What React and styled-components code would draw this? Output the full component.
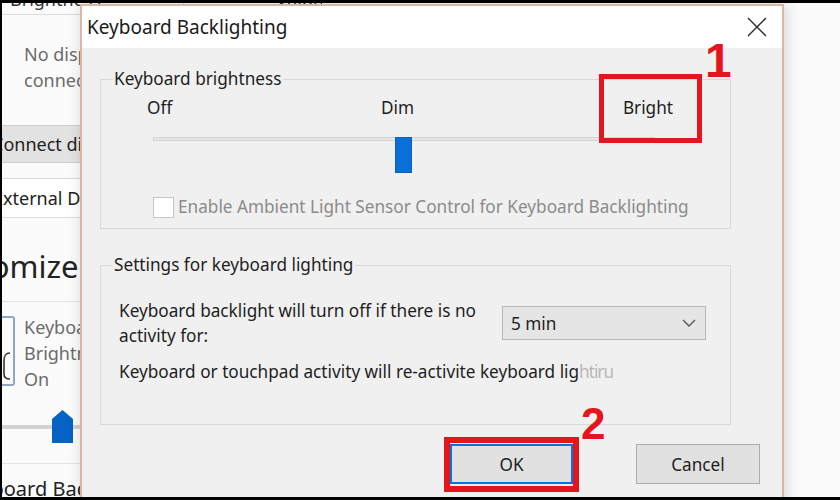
import React from 'react';
import styled, {createGlobalStyle} from 'styled-components';

const GlobalStyle = createGlobalStyle`
  html, body {
    margin: 0;
    padding: 0;
    background: #000;
  }
  body {
    font-family: "Noto Sans", "Open Sans", sans-serif;
    color: #1e1e1e;
  }
  * {
    box-sizing: border-box;
  }
`;

const Screen = styled.div`
  position: relative;
  width: 838px;
  height: 494px;
  margin: 3px 0 0 2px;
  background: #fbfbfb;
  overflow: hidden;
`;

// ---- background settings window ----

const HeaderRow = styled.div`
  display: flex;
  height: 12px;
  margin-left: -2px;
  border-bottom: 1px solid #dcdcdc;
  overflow: hidden;
`;

const HeaderCell = styled.div`
  width: ${p => p.w}px;
  flex-shrink: 0;
  border-left: ${p => (p.first ? 'none' : '1px solid #c9c9c9')};
  padding-left: ${p => p.pad || 0}px;
  text-align: ${p => p.align || 'center'};
  font-size: 18px;
  line-height: 20px;
  color: #333;
  white-space: nowrap;

  span {
    display: block;
    margin-top: -14px;
  }
`;

const BackPane = styled.div`
  display: flex;
  flex-direction: column;
  width: 320px;
`;

const GrayText = styled.div`
  margin-top: ${p => p.top || 0}px;
  padding-left: 22px;
  font-size: 18px;
  line-height: 26px;
  color: #6b6b6b;
`;

const BackButton = styled.div`
  margin-top: 32px;
  height: 38px;
  display: flex;
  align-items: center;
  background: #e2e2e2;
  border-top: 1px solid #cfcfcf;
  border-bottom: 1px solid #cfcfcf;
  font-size: 18px;
  color: #222;
  white-space: nowrap;

  span {
    margin-left: -10px;
  }
`;

const BackListItem = styled.div`
  margin-top: 15px;
  height: 40px;
  display: flex;
  align-items: center;
  background: #fff;
  border-top: 1px solid #d9d9d9;
  border-bottom: 1px solid #d9d9d9;
  font-size: 18px;
  color: #222;
  white-space: nowrap;

  span {
    margin-left: -9px;
  }
`;

const BigHeading = styled.div`
  margin-top: 30px;
  margin-left: -76px;
  font-size: 31px;
  line-height: 36px;
  color: #222;
  white-space: nowrap;
`;

const Divider = styled.div`
  margin-top: ${p => p.top}px;
  height: 1px;
  background: #e2e2e2;
`;

const TileRow = styled.div`
  margin-top: 12px;
  display: flex;
  align-items: flex-start;
`;

const TileIcon = styled.div`
  width: 13px;
  height: 70px;
  margin-top: 2px;
  border: 2px solid #8fa7c0;
  border-left: none;
  border-radius: 0 3px 3px 0;
  display: flex;
  align-items: flex-end;
  padding-bottom: 4px;
`;

const TileText = styled.div`
  padding-left: 9px;
  font-size: 18px;
  line-height: 26px;
  color: #6b6b6b;
`;

const BackSlider = styled.div`
  position: relative;
  margin-top: 18px;
  height: 34px;
`;

const BackTrack = styled.div`
  margin-top: 15px;
  height: 4px;
  background: #d2d2d2;
`;

const BackThumb = styled.svg`
  position: absolute;
  left: 50px;
  top: 0;
`;

const BottomHeading = styled.div`
  margin-top: 12px;
  margin-left: -44px;
  font-size: 20px;
  line-height: 26px;
  color: #222;
  white-space: nowrap;
`;

// ---- dialog ----

const Dialog = styled.div`
  position: absolute;
  left: 78px;
  top: 1px;
  width: 704px;
  height: 520px;
  display: flex;
  flex-direction: column;
  background: #f0f0f0;
  border: 2px solid #dbb5a6;
  box-shadow: 2px 0 14px rgba(0, 0, 0, 0.16);
`;

const TitleBar = styled.div`
  height: 42px;
  flex-shrink: 0;
  display: flex;
  align-items: center;
  justify-content: space-between;
  background: #fff;
`;

const Title = styled.div`
  padding-left: 5px;
  font-size: 19px;
  color: #1a1a1a;
`;

const CloseButton = styled.div`
  width: 50px;
  height: 42px;
  display: flex;
  align-items: center;
  justify-content: center;
`;

const Body = styled.div`
  padding: 20px 51px 0 18px;
  display: flex;
  flex-direction: column;
  font-size: 17.2px;
`;

const Group = styled.fieldset`
  margin: ${p => p.top || 0}px 0 0;
  padding: 0 0 ${p => p.bottom}px;
  min-width: 0;
  border: 1px solid #d9d9d9;
`;

const Legend = styled.legend`
  margin-left: 12px;
  padding: 0 2px 0 1px;
  font-size: 17.2px;
  line-height: 22px;
  color: #1e1e1e;
`;

const LevelLabels = styled.div`
  margin: 7px 57px 0 46px;
  display: flex;
  justify-content: space-between;
  line-height: 22px;
`;

const SliderRow = styled.div`
  position: relative;
  margin: 18px 0 0 52px;
  width: 502px;
  height: 36px;
`;

const Track = styled.div`
  margin-top: 16px;
  height: 4px;
  background: #e6e6e6;
  border: 1px solid #d3d3d3;
`;

const Thumb = styled.div`
  position: absolute;
  top: 0;
  left: ${p => p.left}px;
  width: 17px;
  height: 36px;
  background: #0a6fd6;
  border: 1px solid #0a5fb8;
`;

const CheckRow = styled.label`
  margin: 23px 0 0 52px;
  display: flex;
  align-items: center;
  gap: 4px;
  line-height: 22px;
  color: #8b8b8b;
  white-space: nowrap;
`;

const CheckBox = styled.span`
  width: 21px;
  height: 21px;
  flex-shrink: 0;
  background: #fff;
  border: 1px solid #c6c6c6;
`;

const SettingRow = styled.div`
  margin-top: ${p => p.top}px;
  padding-left: 18px;
  display: flex;
  align-items: flex-start;
  justify-content: space-between;
`;

const SettingText = styled.div`
  line-height: 25px;
  white-space: nowrap;
`;

const Faint = styled.span`
  color: #b8b8b8;
  letter-spacing: -1px;
`;

const Select = styled.div`
  margin: 8px 24px 0 0;
  width: 204px;
  height: 34px;
  padding: 0 9px 0 8px;
  display: flex;
  align-items: center;
  justify-content: space-between;
  background: #e5e5e5;
  border: 1px solid #b7b7b7;
`;

const ButtonRow = styled.div`
  margin: 19px -29px 0 0;
  display: flex;
  justify-content: flex-end;
  gap: 63px;
`;

const Button = styled.div`
  width: ${p => p.w}px;
  height: 40px;
  display: flex;
  align-items: center;
  justify-content: center;
  background: #e1e1e1;
  border: ${p => (p.primary ? '2px solid #0078d7' : '1px solid #adadad')};
  color: #1e1e1e;
`;

// ---- red annotations drawn over the screenshot ----

const Marker = styled.div`
  position: absolute;
  left: ${p => p.x}px;
  top: ${p => p.y}px;
  width: ${p => p.w}px;
  height: ${p => p.h}px;
  border: ${p => p.b}px solid #e3151d;
`;

const Step = styled.div`
  position: absolute;
  left: ${p => p.x}px;
  top: ${p => p.y}px;
  font-family: "Liberation Sans", Arial, sans-serif;
  font-weight: 700;
  font-size: ${p => p.size}px;
  line-height: 1;
  color: #e3151d;
`;

const App = () => {
    return (
        <>
            <GlobalStyle/>
            <Screen>
                <BackPane>
                    <HeaderRow>
                        <HeaderCell w={183} first align="left" pad={10}><span>Brightness</span></HeaderCell>
                        <HeaderCell w={249}><span>Volume</span></HeaderCell>
                        <HeaderCell w={246}><span>Battery status</span></HeaderCell>
                        <HeaderCell w={170} align="left" pad={44}><span>Screen orientation</span></HeaderCell>
                    </HeaderRow>
                    <GrayText top={26}>No display<br/>connected</GrayText>
                    <BackButton><span>Connect display</span></BackButton>
                    <BackListItem><span>External Display</span></BackListItem>
                    <BigHeading>Customize</BigHeading>
                    <Divider top={17}/>
                    <TileRow>
                        <TileIcon>
                            <svg width="9" height="28" viewBox="0 0 9 28">
                                <path d="M8 1 C3 1 2 4 2 9 L2 22 C2 26 4 27 8 27" fill="none" stroke="#333" strokeWidth="1.6"/>
                            </svg>
                        </TileIcon>
                        <TileText>Keyboard<br/>Brightness<br/>On</TileText>
                    </TileRow>
                    <BackSlider>
                        <BackTrack/>
                        <BackThumb width="21" height="33" viewBox="0 0 21 33">
                            <polygon points="10.5,0 21,9 21,33 0,33 0,9" fill="#0563c4"/>
                        </BackThumb>
                    </BackSlider>
                    <Divider top={19}/>
                    <BottomHeading>Keyboard Backlighting</BottomHeading>
                </BackPane>

                <Dialog>
                    <TitleBar>
                        <Title>Keyboard Backlighting</Title>
                        <CloseButton>
                            <svg width="20" height="20" viewBox="0 0 20 20">
                                <path d="M1 1 L19 19 M19 1 L1 19" stroke="#2b2b2b" strokeWidth="1.4" fill="none"/>
                            </svg>
                        </CloseButton>
                    </TitleBar>
                    <Body>
                        <Group bottom={10}>
                            <Legend>Keyboard brightness</Legend>
                            <LevelLabels>
                                <span>Off</span>
                                <span>Dim</span>
                                <span>Bright</span>
                            </LevelLabels>
                            <SliderRow>
                                <Track/>
                                <Thumb left={242}/>
                            </SliderRow>
                            <CheckRow>
                                <CheckBox/>
                                Enable Ambient Light Sensor Control for Keyboard Backlighting
                            </CheckRow>
                        </Group>
                        <Group top={25} bottom={40}>
                            <Legend>Settings for keyboard lighting</Legend>
                            <SettingRow top={22}>
                                <SettingText>
                                    Keyboard backlight will turn off if there is no<br/>activity for:
                                </SettingText>
                                <Select>
                                    <span>5 min</span>
                                    <svg width="14" height="8" viewBox="0 0 14 8">
                                        <polyline points="1,1 7,7 13,1" fill="none" stroke="#555" strokeWidth="1.4"/>
                                    </svg>
                                </Select>
                            </SettingRow>
                            <SettingRow top={11}>
                                <SettingText>
                                    Keyboard or touchpad activity will re-activite keyboard lig<Faint>htiru</Faint>
                                </SettingText>
                            </SettingRow>
                        </Group>
                        <ButtonRow>
                            <Button primary w={123}>OK</Button>
                            <Button w={124}>Cancel</Button>
                        </ButtonRow>
                    </Body>
                </Dialog>

                <Marker x={597} y={71} w={103} h={69} b={5}/>
                <Step x={703} y={34} size={48}>1</Step>
                <Marker x={442} y={434} w={135} h={55} b={6}/>
                <Step x={579} y={399} size={44}>2</Step>
            </Screen>
        </>
    );
};

export default App;
